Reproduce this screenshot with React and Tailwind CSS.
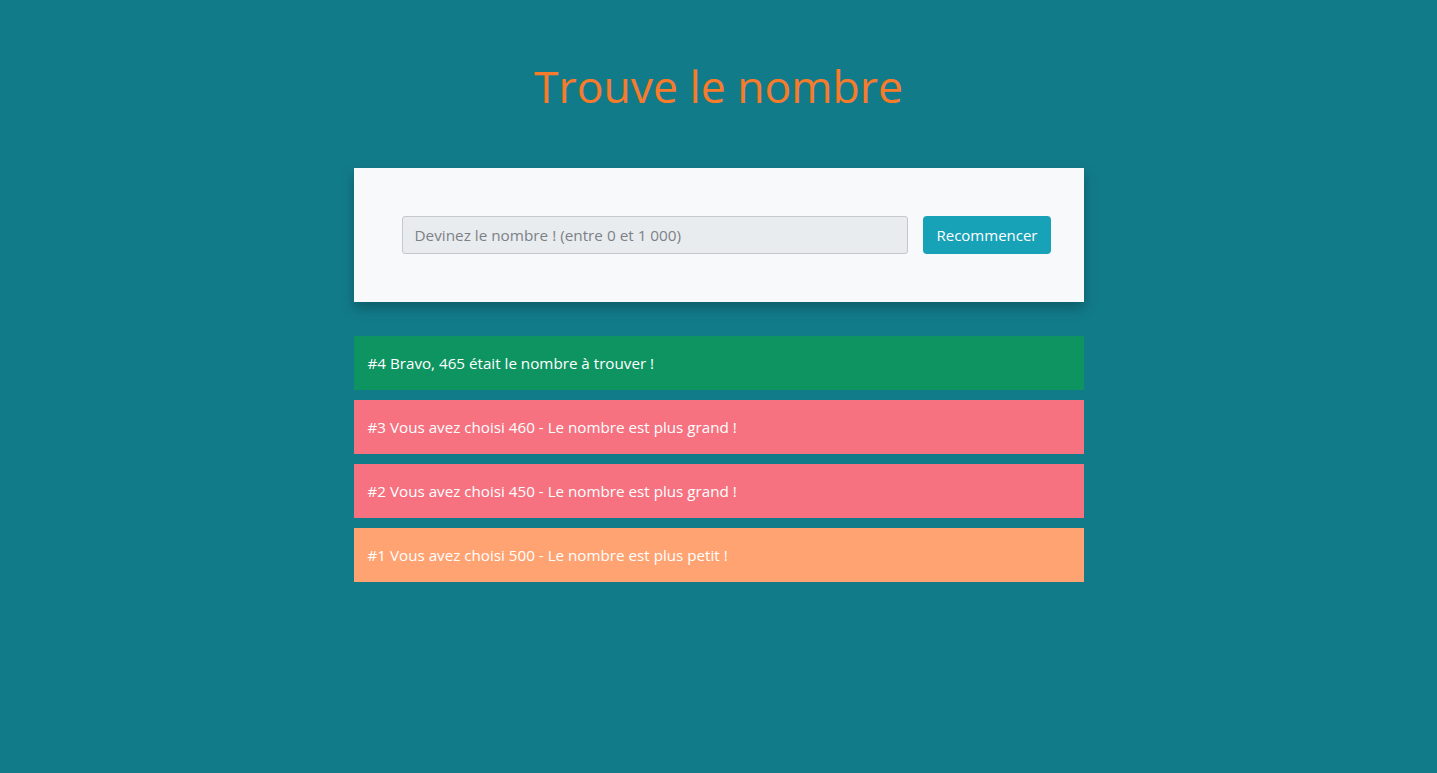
export default function App() {
  const essais = [
    { id: 4, text: "#4 Bravo, 465 était le nombre à trouver !", color: "bg-[#0e9461]" },
    { id: 3, text: "#3 Vous avez choisi 460 - Le nombre est plus grand !", color: "bg-[#f67280]" },
    { id: 2, text: "#2 Vous avez choisi 450 - Le nombre est plus grand !", color: "bg-[#f67280]" },
    { id: 1, text: "#1 Vous avez choisi 500 - Le nombre est plus petit !", color: "bg-[#ffa372]" },
  ];

  return (
    <div className="min-h-screen bg-[#127b8a] font-['Open_Sans',sans-serif] pt-[56px]">
      <h1 className="text-center text-[#f77b2a] text-[44.5px] leading-[60px] font-normal">
        Trouve le nombre
      </h1>

      <div className="w-[730px] mx-auto mt-[52px]">
        <div className="bg-[#f8f9fa] shadow-[0_6px_12px_rgba(0,0,0,0.25)] pl-[48px] pr-[33px] py-[48px] flex items-center gap-[15px]">
          <input
            type="text"
            placeholder="Devinez le nombre ! (entre 0 et 1 000)"
            className="flex-1 h-[38px] bg-[#e9ecef] border border-[#c4c8cc] rounded-[3px] px-3 text-[15.3px] text-[#495057] placeholder:text-[#7b8187] outline-none"
          />
          <button className="h-[38px] px-[13px] bg-[#17a2b8] text-white text-[15px] rounded-[4px]">
            Recommencer
          </button>
        </div>

        <div className="mt-[34px] flex flex-col gap-[10px]">
          {essais.map((e) => (
            <div key={e.id} className={`${e.color} h-[54px] flex items-center px-[14px] text-white text-[15.2px]`}>
              {e.text}
            </div>
          ))}
        </div>
      </div>
    </div>
  );
}
